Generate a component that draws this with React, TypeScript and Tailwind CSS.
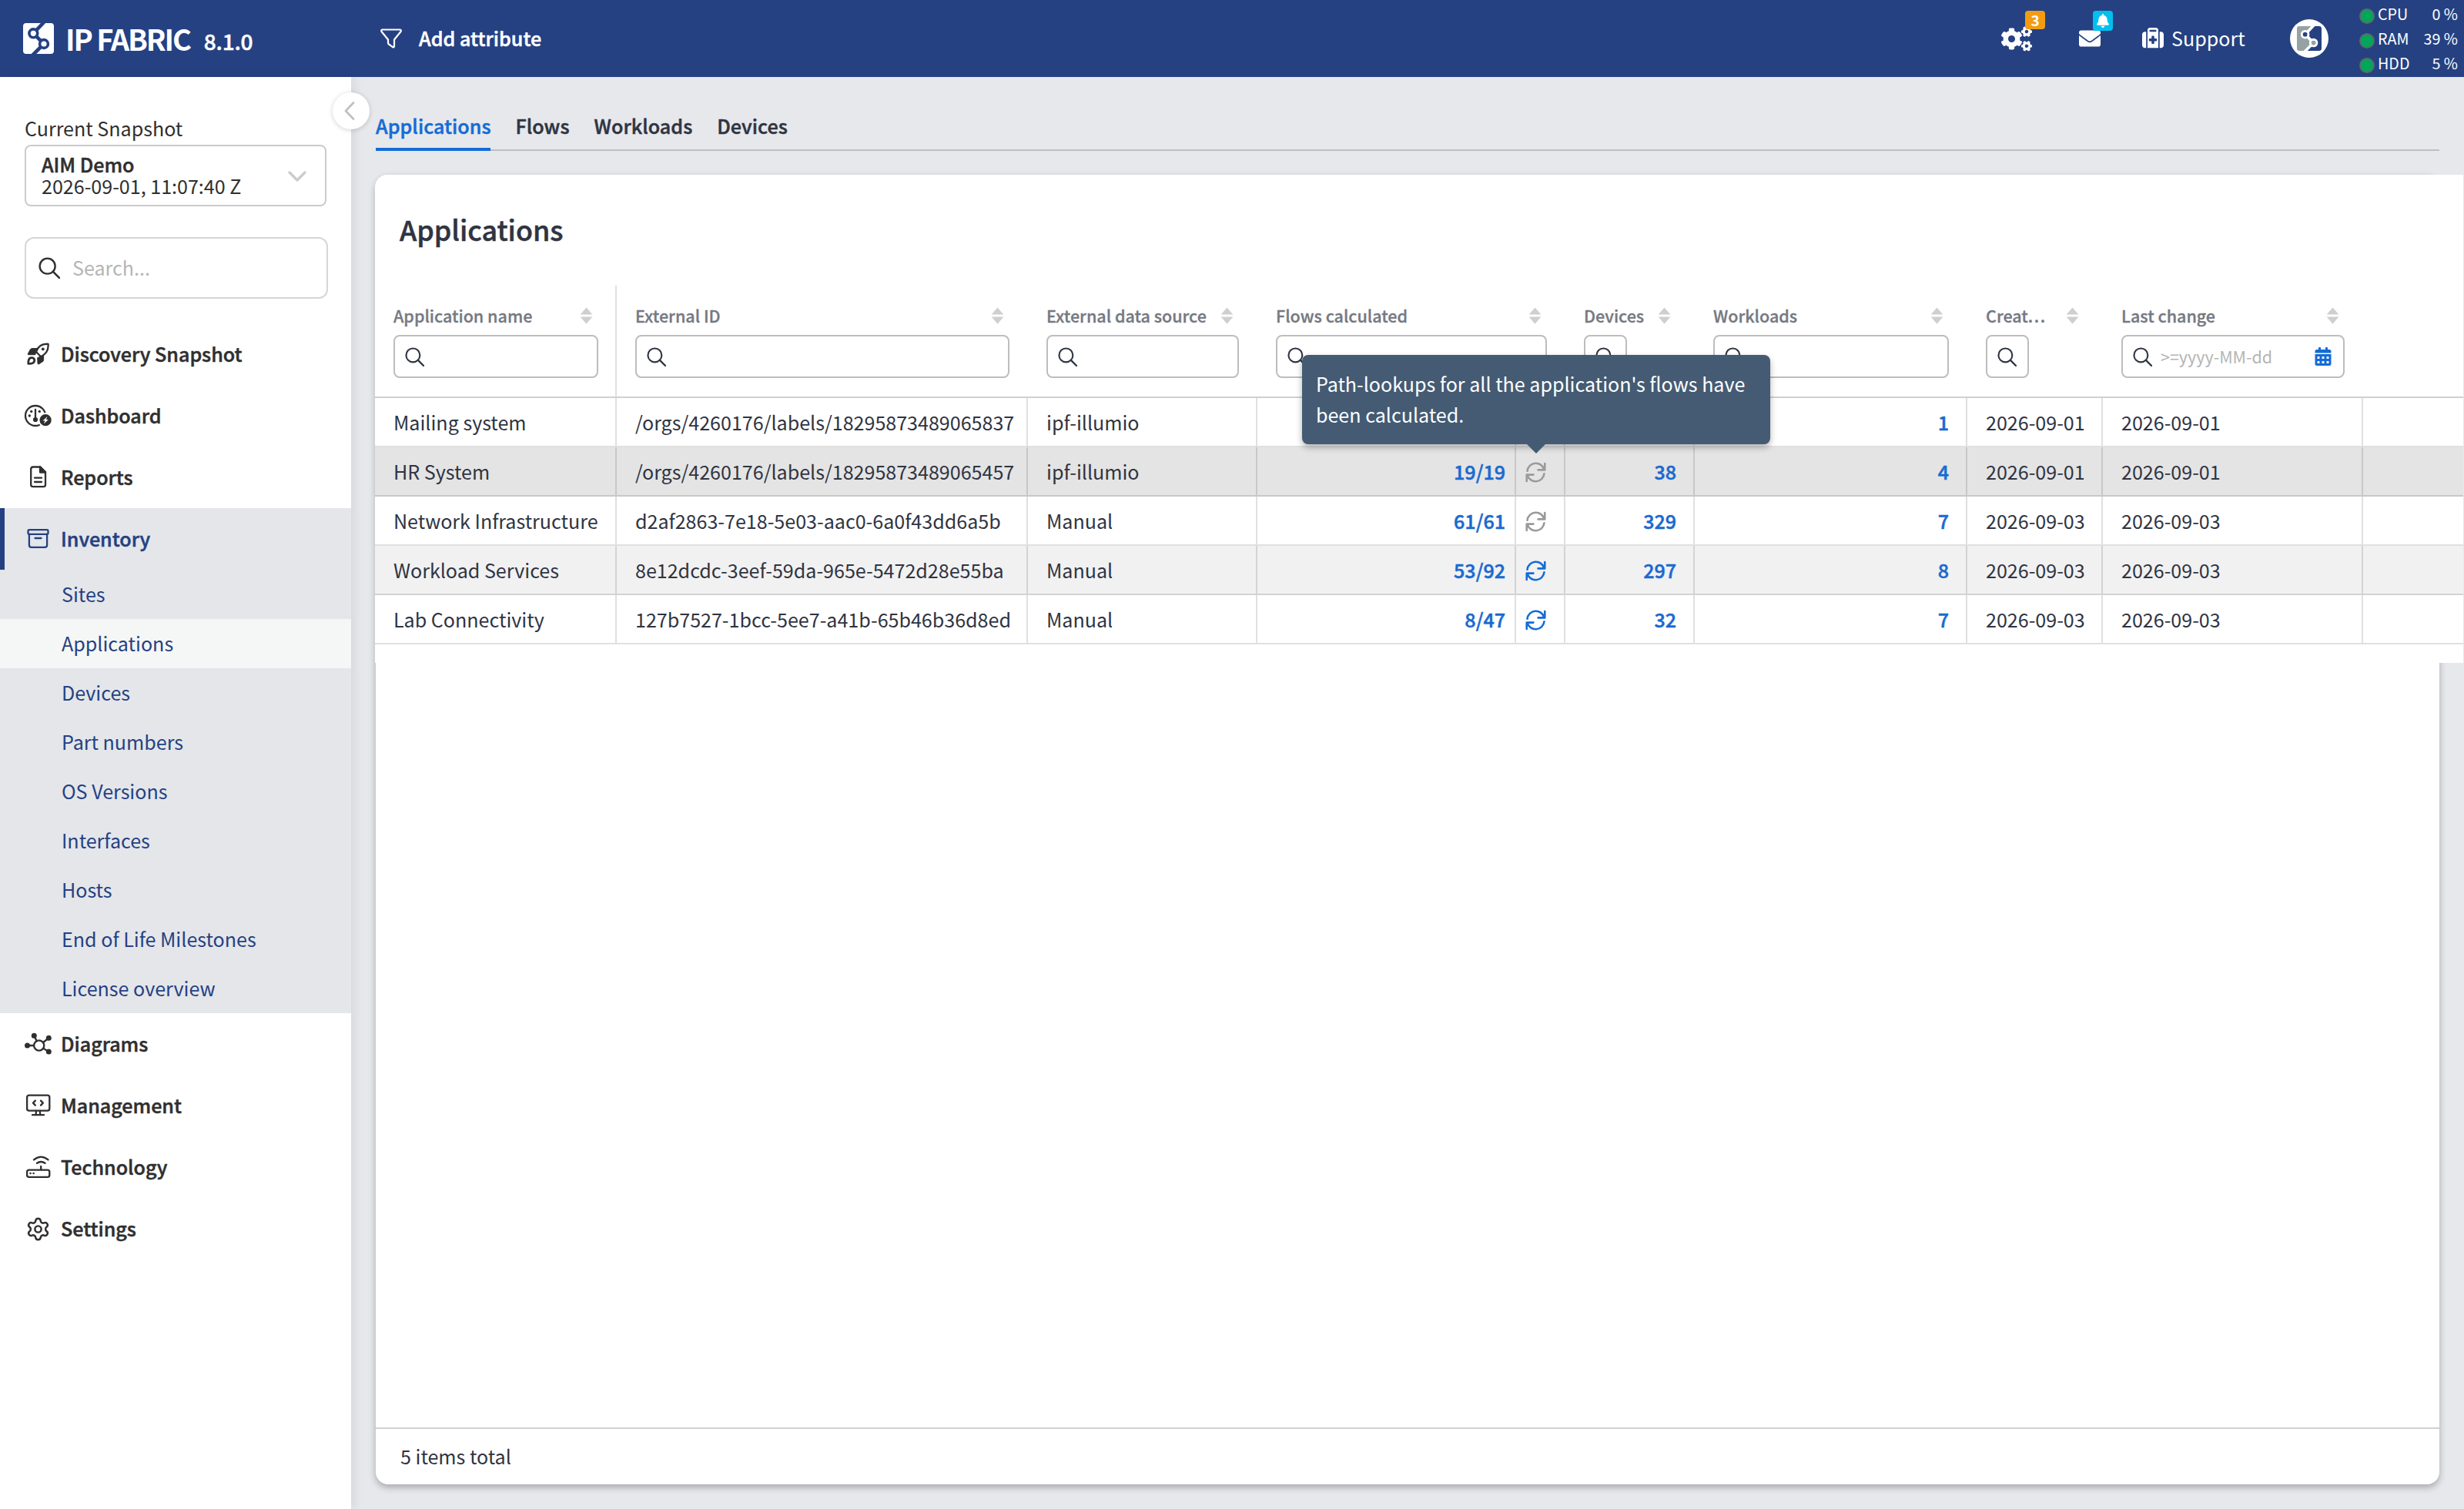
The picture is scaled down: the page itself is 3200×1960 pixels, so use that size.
import type { ReactNode } from "react";
import clsx from "clsx";
import { Settings } from "lucide-react";
import {
  FaBell,
  FaCalendarAlt,
  FaCogs,
  FaEnvelope,
} from "react-icons/fa";
import { FaSuitcaseMedical } from "react-icons/fa6";

interface AppRow {
  name: string;
  externalId: string;
  source: string;
  flows: string;
  pending: boolean;
  devices: string;
  workloads: string;
  created: string;
  changed: string;
}

const ROWS: AppRow[] = [
  {
    name: "Mailing system",
    externalId: "/orgs/4260176/labels/18295873489065837",
    source: "ipf-illumio",
    flows: "",
    pending: false,
    devices: "",
    workloads: "1",
    created: "2026-09-01",
    changed: "2026-09-01",
  },
  {
    name: "HR System",
    externalId: "/orgs/4260176/labels/18295873489065457",
    source: "ipf-illumio",
    flows: "19/19",
    pending: false,
    devices: "38",
    workloads: "4",
    created: "2026-09-01",
    changed: "2026-09-01",
  },
  {
    name: "Network Infrastructure",
    externalId: "d2af2863-7e18-5e03-aac0-6a0f43dd6a5b",
    source: "Manual",
    flows: "61/61",
    pending: false,
    devices: "329",
    workloads: "7",
    created: "2026-09-03",
    changed: "2026-09-03",
  },
  {
    name: "Workload Services",
    externalId: "8e12dcdc-3eef-59da-965e-5472d28e55ba",
    source: "Manual",
    flows: "53/92",
    pending: true,
    devices: "297",
    workloads: "8",
    created: "2026-09-03",
    changed: "2026-09-03",
  },
  {
    name: "Lab Connectivity",
    externalId: "127b7527-1bcc-5ee7-a41b-65b46b36d8ed",
    source: "Manual",
    flows: "8/47",
    pending: true,
    devices: "32",
    workloads: "7",
    created: "2026-09-03",
    changed: "2026-09-03",
  },
];

const HOVERED_ROW = 1;

// The font has no 600 weight, a thin stroke brings 500 up to it
const SEMIBOLD = "font-medium [-webkit-text-stroke:0.5px_currentColor]";

const INVENTORY_ITEMS = [
  "Sites",
  "Applications",
  "Devices",
  "Part numbers",
  "OS Versions",
  "Interfaces",
  "Hosts",
  "End of Life Milestones",
  "License overview",
];

function SearchIcon({ className }: { className?: string }) {
  return (
    <svg viewBox="0 0 26 26" fill="none" stroke="currentColor" className={className}>
      <circle cx="10.8" cy="10.8" r="9.3" strokeWidth="2.2" />
      <path d="M17.6 17.6 L25 25" strokeWidth="2.4" strokeLinecap="round" />
    </svg>
  );
}

function SortIcon() {
  return (
    <svg viewBox="0 0 16 20" className="h-[22px] w-[17px] shrink-0 fill-[#cfcfcf]">
      <path d="M8 0 L15.4 8.6 H0.6 Z" />
      <path d="M8 20 L15.4 11.4 H0.6 Z" />
    </svg>
  );
}

function RefreshIcon({ className }: { className?: string }) {
  return (
    <svg
      viewBox="0 0 28 28"
      fill="none"
      stroke="currentColor"
      strokeWidth="2.7"
      strokeLinecap="round"
      strokeLinejoin="round"
      className={className}
    >
      <path d="M2.6 12.2 A11.6 11.6 0 0 1 25.4 10.6 M26.2 2 V10.8 H17.2" />
      <path d="M25.4 15.8 A11.6 11.6 0 0 1 2.6 17.4 M1.8 26 V17.2 H10.8" />
    </svg>
  );
}

// Two halves of a tile split by a path with two nodes on it
function BrandMark({
  left,
  right,
  channel,
  className,
}: {
  left: string;
  right: string;
  channel: string;
  className?: string;
}) {
  return (
    <svg viewBox="0 0 40 40" className={className}>
      <path d="M4 0 H27 L13.3 13.3 L27 27 L14 40 H4 Q0 40 0 36 V4 Q0 0 4 0 Z" fill={left} />
      <path d="M27 0 H36 Q40 0 40 4 V36 Q40 40 36 40 H14 L27 27 L13.3 13.3 Z" fill={right} />
      <path
        d="M27.5 -1.5 L13.3 13.3 L27 27 L12.5 41.5"
        fill="none"
        stroke={channel}
        strokeWidth="4.6"
      />
      <circle cx="13.3" cy="13.3" r="5.4" fill={right} stroke={channel} strokeWidth="3.6" />
      <circle cx="27" cy="27" r="5.4" fill={left} stroke={channel} strokeWidth="3.6" />
    </svg>
  );
}

function NavIcon({ children }: { children: ReactNode }) {
  return (
    <svg
      viewBox="0 0 36 30"
      fill="none"
      stroke="currentColor"
      strokeWidth="2.3"
      strokeLinecap="round"
      strokeLinejoin="round"
      className="h-[30px] w-9 shrink-0"
    >
      {children}
    </svg>
  );
}

const RocketIcon = () => (
  <NavIcon>
    <path d="M16 12 C18 5.500 22.500 1.200 31.600 1.800 C32.300 11 28 15.500 22 18.200 Z" />
    <path d="M16.600 7.600 H10.500 Q9 7.800 8.200 9.200 L5.200 14.800 Q5 15.700 6 15.700 H14.500 Z" fill="currentColor" strokeWidth="1" />
    <path d="M18 19.500 L25.600 16.800 V22.500 Q25.600 23.800 24.600 24.500 L19.200 28 Q18 28.300 18 27.200 Z" fill="currentColor" strokeWidth="1" />
    <circle cx="24.800" cy="8.400" r="1.900" fill="currentColor" stroke="none" />
    <path d="M5.800 27.400 C5.600 23.500 6.300 19.600 10 19.600 C12.600 19.600 14 21.200 13.800 23.300 C13.400 26.700 9.600 27.500 5.800 27.400 Z" strokeWidth="2.800" />
  </NavIcon>
);

const DashboardIcon = () => (
  <NavIcon>
    <circle cx="15" cy="15" r="13" />
    <circle cx="7.300" cy="15" r="1.700" fill="currentColor" stroke="none" />
    <circle cx="9.700" cy="9.400" r="1.700" fill="currentColor" stroke="none" />
    <circle cx="20.300" cy="9.400" r="1.700" fill="currentColor" stroke="none" />
    <path d="M15 7 V19" />
    <circle cx="15" cy="20" r="3.100" fill="currentColor" stroke="none" />
    <circle cx="28.100" cy="20.700" r="8.600" fill="currentColor" stroke="white" strokeWidth="2" />
    <path d="M30.500 16 L24.600 21.400 H27.600 L25.900 25.400 L31.800 20 H28.800 Z" fill="white" stroke="none" />
  </NavIcon>
);

const ReportsIcon = () => (
  <NavIcon>
    <path d="M12 1.500 H21.500 L28 8 V24.500 Q28 27.200 25.300 27.200 H12 Q9.200 27.200 9.200 24.500 V4.200 Q9.200 1.500 12 1.500 Z" />
    <path d="M21 1.500 V8.500 H28 Z" fill="currentColor" />
    <path d="M14 15.700 H23 M14 21 H23" />
  </NavIcon>
);

const InventoryIcon = () => (
  <NavIcon>
    <rect x="5.500" y="3.200" width="26" height="5.600" rx="1.500" />
    <path d="M6.900 9 V23 Q6.900 25.900 9.800 25.900 H27.200 Q30.100 25.900 30.100 23 V9" />
    <path d="M14.500 14 H22.500" />
  </NavIcon>
);

const DiagramsIcon = () => (
  <NavIcon>
    <circle cx="19.700" cy="17" r="6.600" />
    <path d="M4.700 17 H13 M13.500 4 L16.500 11 M32 7.500 L25 13 M32 25 L25.300 20.600" />
    <g fill="currentColor" stroke="none">
      <circle cx="4.500" cy="17" r="3.500" />
      <circle cx="13.300" cy="4.200" r="3.500" />
      <circle cx="32.300" cy="7.300" r="3.500" />
      <circle cx="32.300" cy="25" r="3.500" />
    </g>
  </NavIcon>
);

const ManagementIcon = () => (
  <NavIcon>
    <rect x="4.100" y="1.600" width="29.200" height="20" rx="2.600" />
    <path d="M11 27.200 H26 M16 22 L15.600 27 M20.800 22 L21.200 27" />
    <path d="M14.800 8.600 L12 11.600 L14.800 14.600 M22 8.600 L24.800 11.600 L22 14.600" />
  </NavIcon>
);

const TechnologyIcon = () => (
  <NavIcon>
    <rect x="4.100" y="18.600" width="29.200" height="9.200" rx="2.600" />
    <circle cx="8.500" cy="23" r="1.300" fill="currentColor" stroke="none" />
    <circle cx="12.600" cy="23" r="1.300" fill="currentColor" stroke="none" />
    <path d="M22.200 14 V18 M17 9.800 Q22.200 6.200 27.500 9.800 M13 5.400 Q22.200 -2.200 31.500 5.400" />
  </NavIcon>
);

const GearIcon = () => (
  <span className="flex w-9 shrink-0 justify-center">
    <Settings size={33} strokeWidth={1.8} />
  </span>
);

function NavItem({
  icon,
  label,
  active = false,
}: {
  icon: ReactNode;
  label: string;
  active?: boolean;
}) {
  return (
    <div
      className={clsx(
        "flex h-20 items-center gap-3 border-l-[6px] pl-[25px]",
        SEMIBOLD,
        active
          ? "border-[#254182] bg-[#e4e6ea] text-[#254182]"
          : "border-transparent text-[#2f2f2f]"
      )}
    >
      {icon}
      <span>{label}</span>
    </div>
  );
}

function Header() {
  const stats = [
    { label: "CPU", value: "0 %" },
    { label: "RAM", value: "39 %" },
    { label: "HDD", value: "5 %" },
  ];

  return (
    <header className="flex h-[100px] shrink-0 items-center bg-[#254182] text-white">
      <div className="flex w-[494px] items-center pl-[30px]">
        <BrandMark left="#ffffff" right="#ffffff" channel="#254182" className="size-10" />
        <span className="ml-[15px] text-[38px] leading-none font-bold tracking-[-2.1px]">IP FABRIC</span>
        <span className={clsx("mt-1.5 ml-[18px] text-[28px] leading-none tracking-[-0.2px]", SEMIBOLD)}>8.1.0</span>
      </div>
      <svg
        viewBox="0 0 28 26"
        className="h-[26px] w-7"
        fill="none"
        stroke="currentColor"
        strokeWidth="2.2"
        strokeLinejoin="round"
      >
        <path d="M2.500 1.500 H25.500 Q27.500 2 26.500 4 L18 14.500 V23.500 Q17.500 25 16 24 L11 20.500 Q10 19.800 10 18.500 V14.500 L1.500 4 Q0.500 2 2.500 1.500 Z" />
      </svg>
      <span className={clsx("ml-[22px] tracking-[0.05px]", SEMIBOLD)}>Add attribute</span>

      <div className="ml-auto flex h-full items-center">
        <div className="relative mr-[61px]">
          <FaCogs className="h-[33px] w-10" />
          <span className="absolute -top-[20px] left-[31px] flex h-6 w-[26px] items-center justify-center rounded bg-[#f39c12] text-[19px] leading-none font-bold">
            3
          </span>
        </div>
        <div className="relative mr-[54px]">
          <FaEnvelope className="size-7" />
          <span className="absolute -top-[22px] left-[18px] flex h-[26px] w-[26px] items-center justify-center rounded bg-[#00c0ef]">
            <FaBell className="h-[18px] w-4" />
          </span>
        </div>
        <FaSuitcaseMedical className="mr-2.5 size-7" />
        <span className="w-[154px]">Support</span>
        <div className="flex size-[50px] items-center justify-center rounded-full bg-white">
          <BrandMark left="#95a1a3" right="#254182" channel="#ffffff" className="size-8" />
        </div>
        <div className="ml-[40px] w-[136px] pr-2">
          {stats.map((s) => (
            <div key={s.label} className="flex h-8 items-center text-[19.7px] leading-8">
              <span className="mt-1.5 mr-1 size-5 rounded-full border-2 border-[#5c6b66] bg-[#00a65a]" />
              <span>{s.label}</span>
              <span className="ml-auto">{s.value}</span>
            </div>
          ))}
        </div>
      </div>
    </header>
  );
}

function Sidebar() {
  return (
    <aside className="relative z-10 flex w-[456px] shrink-0 flex-col bg-white text-[#2f2f2f] shadow-[4px_0_12px_rgba(0,30,30,0.08)]">
      <button className="absolute top-5 -right-6 flex size-12 items-center justify-center rounded-full bg-white shadow-[0_1px_6px_rgba(0,0,0,0.18)]">
        <svg viewBox="0 0 14 24" className="mr-1 h-6 w-3.5" fill="none" stroke="#bfbfbf" strokeWidth="2.6" strokeLinecap="round" strokeLinejoin="round">
          <path d="M12 1.500 L2 12 L12 22.500" />
        </svg>
      </button>

      <div className="px-8 pt-[46px]">
        <div className="mb-0.5 h-10 leading-10">Current Snapshot</div>
        <div className="flex h-20 w-[392px] items-center justify-between rounded-lg border-2 border-[#cbcbcb] pr-6 pl-5">
          <div className="pb-0.5 leading-7">
            <div className={SEMIBOLD}>AIM Demo</div>
            <div>2026-09-01, 11:07:40 Z</div>
          </div>
          <svg viewBox="0 0 24 14" className="mt-0.5 h-3.5 w-6" fill="none" stroke="#cbcbcb" strokeWidth="3.2" strokeLinecap="round" strokeLinejoin="round">
            <path d="M2 2 L12 12 L22 2" />
          </svg>
        </div>
        <div className="mt-10 flex h-20 w-[394px] items-center gap-4 rounded-xl border-2 border-[#d6d6d6] pl-4">
          <SearchIcon className="size-7" />
          <span className="text-[#b5b5b5]">Search...</span>
        </div>
      </div>

      <nav className="mt-8">
        <NavItem icon={<RocketIcon />} label="Discovery Snapshot" />
        <NavItem icon={<DashboardIcon />} label="Dashboard" />
        <NavItem icon={<ReportsIcon />} label="Reports" />
        <NavItem icon={<InventoryIcon />} label="Inventory" active />
        <div className="bg-[#e4e6ea] text-[#254182]">
          {INVENTORY_ITEMS.map((item) => (
            <div
              key={item}
              className={clsx(
                "flex h-16 items-center pl-20",
                item === "Applications" && "bg-[#f5f6f6]"
              )}
            >
              {item}
            </div>
          ))}
        </div>
        <NavItem icon={<DiagramsIcon />} label="Diagrams" />
        <NavItem icon={<ManagementIcon />} label="Management" />
        <NavItem icon={<TechnologyIcon />} label="Technology" />
        <NavItem icon={<GearIcon />} label="Settings" />
      </nav>
    </aside>
  );
}

interface HeadCellProps {
  label: ReactNode;
  width: string;
  narrow?: boolean;
  children?: ReactNode;
}

function HeadCell({ label, width, narrow = false, children }: HeadCellProps) {
  return (
    <div className={clsx("shrink-0 pt-5 pl-6", width)}>
      <div className="flex h-[38px] items-center justify-between pr-[31px] text-[21.5px] font-medium whitespace-nowrap text-[#757982] [-webkit-text-stroke:0.3px_currentColor]">
        <span>{label}</span>
        <SortIcon />
      </div>
      <div
        className={clsx(
          "mt-1.5 flex h-14 items-center rounded-lg border-2 border-[#bdbdbd] pl-[13px]",
          narrow ? "w-14" : "mr-6"
        )}
      >
        <SearchIcon className="size-[25px] shrink-0 text-[#2f3442]" />
        {children}
      </div>
    </div>
  );
}

function Cell({
  width,
  className,
  children,
}: {
  width: string;
  className?: string;
  children?: ReactNode;
}) {
  return (
    <div
      className={clsx(
        "flex shrink-0 items-center border-r-2 border-black/12 pt-0.5 whitespace-nowrap",
        width,
        className
      )}
    >
      {children}
    </div>
  );
}

function Tooltip() {
  return (
    <div className="absolute bottom-[66px] left-[-278px] z-20 h-[116px] w-[608px] rounded-lg bg-[#445b73] px-[18px] py-[17px] leading-10 whitespace-normal text-white shadow-[0_4px_8px_rgba(0,0,0,0.3)]">
      Path-lookups for all the application's flows have been calculated.
      <svg viewBox="0 0 24 12" className="absolute top-full left-[292px] h-3 w-6 fill-[#445b73]">
        <path d="M0 0 H24 L12 12 Z" />
      </svg>
    </div>
  );
}

function ApplicationsTable() {
  const linkCell = clsx("justify-end text-[#1a69d0]", SEMIBOLD);

  return (
    <div className="h-[490px]">
      <div className="flex h-[146px] border-b-2 border-[#d0d0d0]">
        <HeadCell label="Application name" width="w-[314px] border-r-2 border-black/12 [&>div:last-child]:mr-[22px] [&>div:first-child]:pr-[29px]" />
        <HeadCell label="External ID" width="w-[534px]" />
        <HeadCell label="External data source" width="w-[298px]" />
        <HeadCell label="Flows calculated" width="w-[400px]" />
        <HeadCell label="Devices" width="w-[168px]" narrow />
        <HeadCell label="Workloads" width="w-[354px]" />
        <HeadCell
          label={
            <>
              Creat<span className="tracking-[1.6px]">...</span>
            </>
          }
          width="w-[176px]"
          narrow
        />
        <HeadCell label="Last change" width="w-[338px]">
          <span className="ml-[11px] text-[21.5px] text-[#b5b5b5]">&gt;=yyyy-MM-dd</span>
          <FaCalendarAlt className="mr-[15px] ml-auto h-6 w-[22px] text-[#146cd6]" />
        </HeadCell>
      </div>
      {ROWS.map((row, i) => (
        <div
          key={row.name}
          className={clsx(
            "flex h-16 border-b-2 border-black/12",
            i === HOVERED_ROW ? "bg-[#e4e4e4]" : i % 2 === 1 ? "bg-[#f1f1f1]" : "bg-white"
          )}
        >
          <Cell width="w-[314px]" className="pl-6">{row.name}</Cell>
          <Cell width="w-[534px]" className="pl-6">{row.externalId}</Cell>
          <Cell width="w-[298px]" className="pl-6">{row.source}</Cell>
          <Cell width="w-[336px]" className={clsx("pr-3", linkCell)}>
            {row.flows}
          </Cell>
          <Cell width="w-16" className="relative pl-3">
            {row.flows && (
              <RefreshIcon
                className={clsx("size-[27px]", row.pending ? "text-[#146cd6]" : "text-[#9a9a9a]")}
              />
            )}
            {i === HOVERED_ROW && <Tooltip />}
          </Cell>
          <Cell width="w-[168px]" className={clsx("pr-[22px]", linkCell)}>
            {row.devices}
          </Cell>
          <Cell width="w-[354px]" className={clsx("pr-[22px]", linkCell)}>
            {row.workloads}
          </Cell>
          <Cell width="w-[176px]" className="pl-6">{row.created}</Cell>
          <Cell width="w-[338px]" className="pl-6">{row.changed}</Cell>
        </div>
      ))}
    </div>
  );
}

export default function App() {
  const tabs = ["Applications", "Flows", "Workloads", "Devices"];

  return (
    <div className="flex h-[1960px] w-[3200px] flex-col overflow-hidden bg-[#e7e8ec] font-['Noto_Sans_CJK_SC','Open_Sans',sans-serif] text-[25.07px] text-[#2f3442]">
      <Header />
      <div className="flex min-h-0 flex-1">
        <Sidebar />
        <main className="flex min-w-0 flex-1 flex-col px-8 pb-8">
          {/* Tabs */}
          <div className={clsx("flex h-24 shrink-0 gap-8 border-b-2 border-[#bcbfc5] tracking-[0.06px]", SEMIBOLD)}>
            {tabs.map((tab, i) => (
              <div
                key={tab}
                className={clsx(
                  "h-24 pt-[43px] leading-10",
                  i === 0 && "border-b-4 border-[#146cd6] text-[#146cd6]"
                )}
              >
                {tab}
              </div>
            ))}
          </div>

          {/* Card, the table runs past its right edge */}
          <section className="mt-[31px] flex flex-1 flex-col rounded-2xl bg-white shadow-[0_4px_10px_rgba(0,0,0,0.28)]">
            <div className="-ml-px w-[2712px] rounded-tl-2xl bg-white">
              <h1 className={clsx("h-36 pl-8 text-[35.8px] leading-[140px]", SEMIBOLD)}>Applications</h1>
              <ApplicationsTable />
            </div>
            <footer className="mt-auto h-[74px] border-t-2 border-[#d0d2d2] pl-8 leading-[71px]">
              5 items total
            </footer>
          </section>
        </main>
      </div>
    </div>
  );
}
